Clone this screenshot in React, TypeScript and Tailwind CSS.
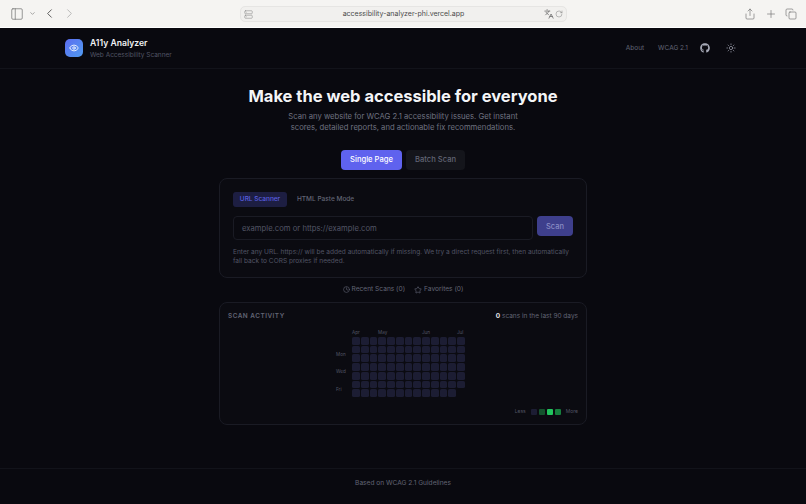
import { Clock, Star, Sun, Eye, ChevronLeft, ChevronRight, ChevronDown, PanelLeft, Share, Plus, Copy, RotateCw, Languages, Server } from 'lucide-react';
import { FaGithub } from 'react-icons/fa';

const rows = [0, 1, 2, 3, 4, 5, 6];
const cols = [0, 1, 2, 3, 4, 5, 6, 7, 8, 9, 10, 11, 12];

function BrowserBar() {
  return (
    <div className="h-7 bg-[#f5f4f2] border-b border-[#ffffff] flex items-center relative text-[#6f6f6f]">
      <div className="flex items-center pl-[10px]">
        <PanelLeft className="w-[14px] h-[14px]" strokeWidth={1.2} />
        <ChevronDown className="w-[7px] h-[7px] ml-[5px]" strokeWidth={2} />
        <ChevronLeft className="w-[15px] h-[15px] ml-[6px] text-[#555555]" strokeWidth={1.5} />
        <ChevronRight className="w-[15px] h-[15px] ml-[5px] text-[#b5b5b5]" strokeWidth={1.5} />
      </div>
      <div className="absolute left-[240px] top-[6px] w-[327px] h-[16px] rounded-[5px] bg-[#f1f0ee] border border-[#e6e5e3] flex items-center justify-center">
        <Server className="absolute left-[3px] w-[9px] h-[9px] text-[#8a8a8a]" strokeWidth={1.5} />
        <span className="text-[7px] text-[#4a4a4a]">accessibility-analyzer-phi.vercel.app</span>
        <Languages className="absolute right-[12px] w-[10px] h-[10px] text-[#666666]" strokeWidth={1.8} />
        <RotateCw className="absolute right-[3px] w-[8px] h-[8px] text-[#777777]" strokeWidth={1.4} />
      </div>
      <div className="ml-auto flex items-center gap-[8px] pr-[9px]">
        <Share className="w-[12px] h-[12px] mr-[1px]" strokeWidth={1.3} />
        <Plus className="w-[12px] h-[12px]" strokeWidth={1.3} />
        <Copy className="w-[12px] h-[12px]" strokeWidth={1.3} />
      </div>
    </div>
  );
}

function Header() {
  return (
    <header className="h-[41px] border-b border-[#12131a] flex items-center justify-between pl-[65px] pr-[70px]">
      <div className="flex items-center gap-[7px]">
        <div className="w-[18px] h-[18px] rounded-[5px] bg-gradient-to-br from-[#5b6cf0] to-[#4f9bf0] flex items-center justify-center">
          <Eye className="w-[10px] h-[10px] text-white" strokeWidth={2} />
        </div>
        <div className="pt-[1px]">
          <div className="text-[8.6px] leading-[12px] font-semibold text-[#f1f2f5]">A11y Analyzer</div>
          <div className="text-[6.5px] leading-[10px] mt-[1px] text-[#525565]">Web Accessibility Scanner</div>
        </div>
      </div>
      <nav className="flex items-center text-[6.5px] text-[#626575]">
        <span className="pt-[1px]">About</span>
        <span className="ml-[14px] pt-[1px]">WCAG 2.1</span>
        <FaGithub className="w-[10px] h-[10px] ml-[12px] text-[#a5a8b5]" />
        <Sun className="w-[10px] h-[10px] ml-[16px] text-[#a5a8b5]" strokeWidth={1.6} />
      </nav>
    </header>
  );
}

function ScanCard() {
  return (
    <section className="w-[368px] h-[100px] rounded-[8px] border border-[#1a1b24] bg-[#0b0b11] px-[13px] pt-[13px]">
      <div className="flex items-center gap-[4px] text-[6.5px] font-medium">
        <span className="w-[54px] h-[15px] pt-[1px] rounded-[3px] bg-[#1d1e42] text-[#5a5ee0] flex items-center justify-center">URL Scanner</span>
        <span className="h-[15px] pt-[1px] px-[6px] text-[#626575] flex items-center">HTML Paste Mode</span>
      </div>
      <div className="flex gap-[4px] mt-[9px]">
        <div className="w-[300px] h-[24px] pt-[1px] rounded-[4px] border border-[#1a1b24] bg-[#0a0a10] flex items-center pl-[8px] text-[7.7px] text-[#525565]">
          example.com or https://example.com
        </div>
        <button className="w-[36px] h-[20px] pt-[1px] rounded-[4px] bg-[#3e3f8c] text-[7.5px] font-medium text-[#8b8dc4]">Scan</button>
      </div>
      <p className="mt-[8px] text-[6.57px] leading-[9px] text-[#525565] whitespace-nowrap">
        Enter any URL. https:// will be added automatically if missing. We try a direct request first, then automatically
        <br />
        fall back to CORS proxies if needed.
      </p>
    </section>
  );
}

function ActivityGrid() {
  return (
    <div className="flex mt-[7px] ml-[108px]">
      <div className="w-[16px] flex flex-col pt-[18px] text-[4.6px] text-[#525565]">
        <span className="h-[17.4px] flex items-center">Mon</span>
        <span className="h-[17.4px] flex items-center">Wed</span>
        <span className="h-[17.4px] flex items-center">Fri</span>
      </div>
      <div>
        <div className="flex h-[7px] text-[4.6px] leading-[7px] text-[#525565]">
          <span className="w-[26px]">Apr</span>
          <span className="w-[44px]">May</span>
          <span className="w-[35px]">Jun</span>
          <span>Jul</span>
        </div>
        <div className="grid grid-cols-[repeat(13,7.75px)] grid-rows-[repeat(7,7.75px)] gap-[1px] mt-[1px]">
          {rows.map((r) =>
            cols.map((c) =>
              (c === 12 && r === 6) ? <div key={`${r}-${c}`} /> : <div key={`${r}-${c}`} className="rounded-[1.5px] bg-[#1c1d33]" />
            )
          )}
        </div>
      </div>
    </div>
  );
}

function ActivityCard() {
  return (
    <section className="w-[368px] h-[123px] rounded-[8px] border border-[#1a1b24] bg-[#0b0b11] px-[8px] pt-[9px]">
      <div className="flex items-center justify-between">
        <span className="text-[6.4px] font-semibold tracking-[0.5px] text-[#626575]">SCAN ACTIVITY</span>
        <span className="text-[6.5px] text-[#626575]"><b className="text-[#e5e6ea]">0</b> scans in the last 90 days</span>
      </div>
      <ActivityGrid />
      <div className="flex items-center justify-end mt-[9px] text-[5px] text-[#525565]">
        <span>Less</span>
        <span className="w-[6px] h-[6px] rounded-[1px] bg-[#1c1d33] ml-[5px]" />
        <span className="w-[6px] h-[6px] rounded-[1px] bg-[#14532d] ml-[2px]" />
        <span className="w-[6px] h-[6px] rounded-[1px] bg-[#22c55e] ml-[2px]" />
        <span className="w-[6px] h-[6px] rounded-[1px] bg-[#15803d] ml-[2px]" />
        <span className="ml-[5px]">More</span>
      </div>
    </section>
  );
}

export default function App() {
  return (
    <div className="w-[806px] h-[504px] overflow-hidden bg-[#09090f] font-['Inter',sans-serif] flex flex-col">
      <BrowserBar />
      <Header />
      <main className="flex-1 flex flex-col items-center">
        <h1 className="mt-[16px] text-[16.5px] leading-[23px] font-bold text-[#f4f5f7]">Make the web accessible for everyone</h1>
        <p className="mt-[3px] text-[7.7px] leading-[11px] text-[#6f7280] text-center">
          Scan any website for WCAG 2.1 accessibility issues. Get instant
          <br />
          scores, detailed reports, and actionable fix recommendations.
        </p>
        <div className="flex gap-[4px] mt-[17px]">
          <button className="w-[61px] h-[20px] rounded-[4px] bg-[#5f62ee] text-[7.6px] font-medium text-white">Single Page</button>
          <button className="w-[59px] h-[20px] rounded-[4px] bg-[#14151b] text-[7.6px] font-medium text-[#626575]">Batch Scan</button>
        </div>
        <div className="mt-[8px]">
          <ScanCard />
        </div>
        <div className="flex items-center gap-[9px] my-[6px] h-[12px] text-[6.6px] text-[#626575]">
          <span className="flex items-center gap-[2px]"><Clock className="w-[7px] h-[7px]" />Recent Scans (0)</span>
          <span className="flex items-center gap-[2px]"><Star className="w-[8px] h-[8px]" />Favorites (0)</span>
        </div>
        <ActivityCard />
      </main>
      <footer className="h-[36px] pb-[6px] border-t border-[#12131a] flex items-center justify-center text-[6.6px] text-[#626575]">
        Based on WCAG 2.1 Guidelines
      </footer>
    </div>
  );
}
